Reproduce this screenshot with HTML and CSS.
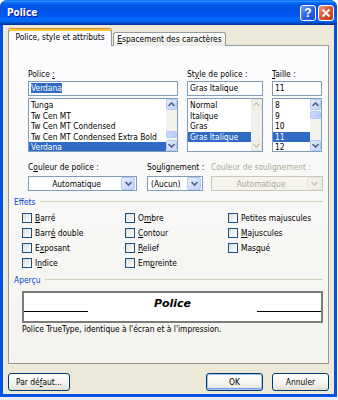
FILE: index.html
```html
<!DOCTYPE html>
<html lang="fr">
  <head>
    <meta charset="UTF-8" />
    <title>Police</title>
    <link rel="stylesheet" href="styles.css">
  </head>
  <body>
    <div class="window">
      <div class="titlebar">
        <span class="title">Police</span>
        <span class="capbtn help">?</span>
        <span class="capbtn close">
          <svg width="10" height="10" viewBox="0 0 10 10"><path d="M1.5 1.5 L8.5 8.5 M8.5 1.5 L1.5 8.5" stroke="#fff" stroke-width="2" /></svg>
        </span>
      </div>

      <div class="client">
        <div class="tabs">
          <div class="tab active">Police, style et attributs</div>
          <div class="tab"><u>E</u>spacement des caractères</div>
        </div>

        <div class="panel">
          <div class="fonts">
            <div class="fcol col-font">
              <div class="lbl">Police <u>:</u></div>
              <div class="field"><span class="hl">Verdana</span></div>
              <div class="listbox">
                <ul class="items">
                  <li>Tunga</li>
                  <li>Tw Cen MT</li>
                  <li>Tw Cen MT Condensed</li>
                  <li>Tw Cen MT Condensed Extra Bold</li>
                  <li class="selected">Verdana</li>
                </ul>
                <div class="vscroll">
                  <span class="sbtn"><svg width="9" height="9" viewBox="0 0 9 9"><path d="M1.5 6 L4.5 3 L7.5 6" fill="none" stroke="#4d6185" stroke-width="1.6" /></svg></span>
                  <span class="track"><span class="thumb thumb-low"></span></span>
                  <span class="sbtn"><svg width="9" height="9" viewBox="0 0 9 9"><path d="M1.5 3 L4.5 6 L7.5 3" fill="none" stroke="#4d6185" stroke-width="1.6" /></svg></span>
                </div>
              </div>
            </div>

            <div class="fcol col-style">
              <div class="lbl">St<u>y</u>le de police :</div>
              <div class="field">Gras Italique</div>
              <div class="listbox">
                <ul class="items">
                  <li>Normal</li>
                  <li>Italique</li>
                  <li>Gras</li>
                  <li class="selected">Gras Italique</li>
                </ul>
                <div class="vscroll off">
                  <span class="sbtn"><svg width="9" height="9" viewBox="0 0 9 9"><path d="M1.5 6 L4.5 3 L7.5 6" fill="none" stroke="#c9c7ba" stroke-width="1.6" /></svg></span>
                  <span class="track"></span>
                  <span class="sbtn"><svg width="9" height="9" viewBox="0 0 9 9"><path d="M1.5 3 L4.5 6 L7.5 3" fill="none" stroke="#c9c7ba" stroke-width="1.6" /></svg></span>
                </div>
              </div>
            </div>

            <div class="fcol col-size">
              <div class="lbl"><u>T</u>aille :</div>
              <div class="field">11</div>
              <div class="listbox">
                <ul class="items">
                  <li>8</li>
                  <li>9</li>
                  <li>10</li>
                  <li class="selected">11</li>
                  <li>12</li>
                </ul>
                <div class="vscroll">
                  <span class="sbtn"><svg width="9" height="9" viewBox="0 0 9 9"><path d="M1.5 6 L4.5 3 L7.5 6" fill="none" stroke="#4d6185" stroke-width="1.6" /></svg></span>
                  <span class="track"><span class="thumb thumb-high"></span></span>
                  <span class="sbtn"><svg width="9" height="9" viewBox="0 0 9 9"><path d="M1.5 3 L4.5 6 L7.5 3" fill="none" stroke="#4d6185" stroke-width="1.6" /></svg></span>
                </div>
              </div>
            </div>
          </div>

          <div class="combos">
            <div class="ccol col-color">
              <div class="lbl">C<u>o</u>uleur de police :</div>
              <div class="combo centered">
                <span class="cval">Automatique</span>
                <span class="cbtn"><svg width="9" height="9" viewBox="0 0 9 9"><path d="M1.5 3 L4.5 6 L7.5 3" fill="none" stroke="#4d6185" stroke-width="1.6" /></svg></span>
              </div>
            </div>
            <div class="ccol col-under">
              <div class="lbl">So<u>u</u>lignement :</div>
              <div class="combo">
                <span class="cval">(Aucun)</span>
                <span class="cbtn"><svg width="9" height="9" viewBox="0 0 9 9"><path d="M1.5 3 L4.5 6 L7.5 3" fill="none" stroke="#4d6185" stroke-width="1.6" /></svg></span>
              </div>
            </div>
            <div class="ccol col-ucolor">
              <div class="lbl muted">Couleur de soulignement :</div>
              <div class="combo centered off">
                <span class="cval">Automatique</span>
                <span class="cbtn"><svg width="9" height="9" viewBox="0 0 9 9"><path d="M1.5 3 L4.5 6 L7.5 3" fill="none" stroke="#c9c7ba" stroke-width="1.6" /></svg></span>
              </div>
            </div>
          </div>

          <div class="group-head"><span>Effets</span></div>
          <div class="effects">
            <label class="chk"><span class="box"></span><span><u>B</u>arré</span></label>
            <label class="chk"><span class="box"></span><span>O<u>m</u>bre</span></label>
            <label class="chk"><span class="box"></span><span>Petites ma<u>j</u>uscules</span></label>
            <label class="chk"><span class="box"></span><span>Barr<u>é</u> double</span></label>
            <label class="chk"><span class="box"></span><span><u>C</u>ontour</span></label>
            <label class="chk"><span class="box"></span><span><u>M</u>ajuscules</span></label>
            <label class="chk"><span class="box"></span><span>E<u>x</u>posant</span></label>
            <label class="chk"><span class="box"></span><span><u>R</u>elief</span></label>
            <label class="chk"><span class="box"></span><span>Mas<u>q</u>ué</span></label>
            <label class="chk"><span class="box"></span><span>I<u>n</u>dice</span></label>
            <label class="chk"><span class="box"></span><span>Em<u>p</u>reinte</span></label>
          </div>

          <div class="group-head preview-head"><span>Aperçu</span></div>
          <div class="preview">
            <span class="base"></span>
            <span class="sample">Police</span>
            <span class="base"></span>
          </div>
          <p class="note">Police TrueType, identique à l'écran et à l'impression.</p>
        </div>

        <div class="buttons">
          <span class="btn btn-default"><span>Par dé<u>f</u>aut...</span></span>
          <span class="btn btn-ok">OK</span>
          <span class="btn btn-cancel">Annuler</span>
        </div>
      </div>
    </div>
    <div class="desktop"></div>
  </body>
</html>
```

FILE: styles.css
```css
body {
  margin: 0;
  background: #fff;
  font-family: "DejaVu Sans Condensed", "DejaVu Sans", sans-serif;
  font-size: 8.4px;
  color: #000;
}
.window {
  width: 337px;
  height: 397px;
  border-radius: 7px 7px 0 0;
  background: #0054e3;
  display: flex;
  flex-direction: column;
  overflow: hidden;
}
.desktop {
  height: 3px;
  background: #e8ecf6;
}
.titlebar {
  flex: none;
  height: 25px;
  display: flex;
  align-items: center;
  padding: 0 3px 0 7px;
  background: linear-gradient(#0058ee 0%, #3593ff 4%, #288eff 6%, #127dff 8%, #036ffc 10%, #0262ee 14%, #0057e5 20%, #0054e3 24%, #0055eb 56%, #005bf5 66%, #026afe 76%, #0062ef 86%, #0052d6 92%, #0040ab 94%, #003092 100%);
}
.title {
  flex: 1;
  color: #fff;
  font-weight: bold;
  font-size: 10px;
  text-shadow: 1px 1px #0f1089;
}
.capbtn {
  width: 16px;
  height: 16px;
  box-sizing: border-box;
  border: 1px solid #fff;
  border-radius: 3px;
  margin-left: 2px;
  display: flex;
  align-items: center;
  justify-content: center;
}
.help {
  background: linear-gradient(135deg, #6f9cf5, #2a62e4 55%, #1d4fd0);
  color: #fff;
  font: bold 12px "Liberation Sans", sans-serif;
}
.close {
  background: linear-gradient(135deg, #eb9a80, #d9522f 50%, #bd3a16);
}
.client {
  flex: 1;
  margin: 0 3px 3px;
  background: #ece9d8;
  padding: 3px 5px 0 5px;
  display: flex;
  flex-direction: column;
}
.tabs {
  display: flex;
  align-items: flex-end;
  height: 18px;
  position: relative;
  z-index: 1;
  margin-bottom: -1px;
}
.tab {
  box-sizing: border-box;
  height: 14px;
  width: 113px;
  margin-left: 1px;
  border: 1px solid #919b9c;
  border-bottom: none;
  border-radius: 3px 3px 0 0;
  background: linear-gradient(#fff, #ecebe6);
  text-align: center;
  line-height: 13px;
  white-space: nowrap;
}
.tab.active {
  width: 104px;
  height: 18px;
  margin-left: 0;
  background: #fcfcfe;
  border-top: 1px solid #e68b2c;
  box-shadow: inset 0 2px #ffc83c;
  line-height: 17px;
}
.panel {
  flex: none;
  box-sizing: border-box;
  height: 319px;
  border: 1px solid #919b9c;
  background: linear-gradient(#fcfcfe, #f4f3ee);
  padding: 23px 5px 0 5px;
}
.lbl {
  height: 11px;
  line-height: 11px;
  white-space: nowrap;
}
.muted {
  color: #aca899;
}
.fonts {
  display: flex;
  gap: 9px;
  margin-left: 14px;
}
.fcol .lbl {
  margin-bottom: 1px;
}
.col-font {
  width: 150px;
}
.col-style {
  width: 76px;
}
.col-size {
  width: 50px;
}
.field {
  box-sizing: border-box;
  height: 15px;
  border: 1px solid #7f9db9;
  background: #fff;
  padding: 0 2px;
  line-height: 13px;
  white-space: nowrap;
}
.hl {
  background: #316ac5;
  color: #fff;
}
.listbox {
  box-sizing: border-box;
  height: 54px;
  margin-top: 2px;
  border: 1px solid #7f9db9;
  background: #fff;
  display: flex;
  overflow: hidden;
}
.items {
  flex: 1;
  list-style: none;
  margin: 0;
  padding: 1px 0 0;
  min-width: 0;
}
.items li {
  height: 10.6px;
  line-height: 10.6px;
  padding: 0 2px;
  white-space: nowrap;
}
.items li.selected {
  background: #316ac5;
  color: #fff;
}
.vscroll {
  width: 11px;
  flex: none;
  display: flex;
  flex-direction: column;
  background: #f3f1ec;
}
.sbtn {
  box-sizing: border-box;
  height: 11px;
  border: 1px solid #b4c8f6;
  border-radius: 2px;
  background: linear-gradient(135deg, #e6eefc, #c1d3fb);
  display: flex;
  align-items: center;
  justify-content: center;
}
.vscroll.off .sbtn {
  border-color: #e8e6dc;
  background: #f2f0e8;
}
.track {
  flex: 1;
  position: relative;
}
.thumb {
  position: absolute;
  left: 0;
  right: 0;
  box-sizing: border-box;
  border: 1px solid #b4c8f6;
  border-radius: 2px;
  background: linear-gradient(90deg, #c9d8fc, #b8cbf8);
}
.thumb-low {
  top: 21px;
  height: 7px;
}
.thumb-high {
  top: 1px;
  height: 8px;
}
.combos {
  display: flex;
  margin: 10px 0 0 14px;
}
.ccol .lbl {
  margin-bottom: 3px;
}
.col-color {
  width: 109px;
  margin-right: 10px;
}
.col-under {
  width: 56px;
  margin-right: 8px;
}
.col-ucolor {
  width: 112px;
}
.combo {
  box-sizing: border-box;
  height: 15px;
  border: 1px solid #7f9db9;
  background: #fff;
  display: flex;
  align-items: center;
  padding: 0 1px 0 3px;
}
.combo .cval {
  flex: 1;
  white-space: nowrap;
}
.combo.centered .cval {
  text-align: center;
}
.combo.off {
  border-color: #c9c7ba;
  background: #f4f3ee;
  color: #aca899;
}
.cbtn {
  box-sizing: border-box;
  width: 14px;
  height: 13px;
  border: 1px solid #b4c8f6;
  border-radius: 2px;
  background: linear-gradient(135deg, #e6eefc, #c1d3fb);
  display: flex;
  align-items: center;
  justify-content: center;
}
.combo.off .cbtn {
  border-color: #e8e6dc;
  background: #f2f0e8;
}
.group-head {
  display: flex;
  align-items: center;
  gap: 5px;
  height: 11px;
  margin-top: 5px;
  color: #0046d5;
}
.group-head::after {
  content: "";
  flex: 1;
  border-top: 1px solid #d0d0bf;
}
.effects {
  display: grid;
  grid-template-columns: 103px 103px 1fr;
  grid-auto-rows: 15px;
  margin: 3px 0 0 8px;
}
.chk {
  display: flex;
  align-items: center;
  white-space: nowrap;
}
.box {
  box-sizing: border-box;
  width: 10px;
  height: 10px;
  margin-right: 3px;
  border: 1px solid #1c5180;
  background: linear-gradient(135deg, #dcdcd7, #fff);
}
.preview-head {
  margin-top: 4px;
}
.preview {
  box-sizing: border-box;
  height: 32px;
  margin: 6px 0 0 8px;
  border: 2px solid #7c7c7c;
  background: #fff;
  display: flex;
  align-items: flex-start;
}
.base {
  width: 64px;
  height: 18px;
  border-bottom: 1px solid #000;
}
.sample {
  flex: 1;
  text-align: center;
  font-family: "DejaVu Sans", sans-serif;
  font-weight: bold;
  font-style: italic;
  font-size: 11px;
  line-height: 22px;
}
.note {
  margin: 1px 0 0 8px;
  line-height: 11px;
}
.buttons {
  display: flex;
  margin-top: 9px;
}
.btn {
  box-sizing: border-box;
  height: 18px;
  width: 57px;
  border: 1px solid #003c74;
  border-radius: 3px;
  background: linear-gradient(#fff, #f4f3ee 60%, #e3e0d5);
  display: flex;
  align-items: center;
  justify-content: center;
  white-space: nowrap;
}
.btn-default {
  width: 62px;
}
.btn-ok {
  margin-left: auto;
  box-shadow: inset 0 0 0 1px #a6c1f6, inset 0 -1px 0 1px #7b9eea;
}
.btn-cancel {
  margin-left: 9px;
}
```
